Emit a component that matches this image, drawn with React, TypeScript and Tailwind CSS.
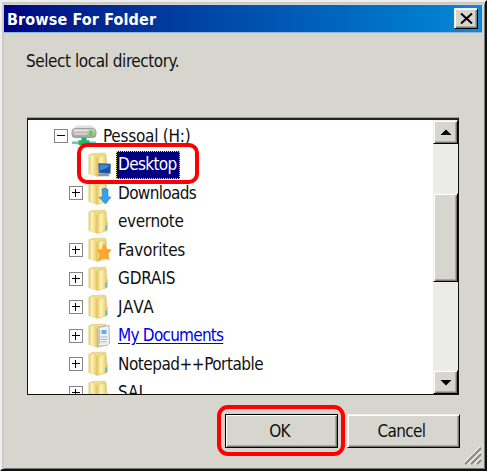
import React from "react";

type IconKind = "plain" | "desktop" | "download" | "star" | "docs";

function FolderIcon({ kind }: { kind: IconKind }) {
  return (
    <svg width="24" height="26" viewBox="0 0 24 26" className="block shrink-0">
      <defs>
        <linearGradient id="back" x1="0" x2="1">
          <stop offset="0" stopColor="#ecd989" />
          <stop offset="1" stopColor="#eedd93" />
        </linearGradient>
        <linearGradient id="front" x1="0" x2="1">
          <stop offset="0" stopColor="#e8cb68" />
          <stop offset="0.35" stopColor="#fff3b8" />
          <stop offset="1" stopColor="#e3c55c" />
        </linearGradient>
      </defs>
      <path d="M.8 3 L4 1.5 L17 1 L18 2 L18.5 21.5 L9 24 L.8 21.5Z" fill="url(#back)" stroke="#e0ca7c" strokeWidth=".6" />
      <path d="M1 4 L5 3 Q9 3.5 9.3 7 L9.3 24.5 L1.2 21.8Z" fill="url(#front)" />
      <path d="M9.3 7 Q9.3 5 12 4.3 L16.5 3.2 Q18 3.2 18 5 L18.3 12 L19.5 13.5 L19.3 21.5 L9.3 24.5Z" fill="url(#front)" stroke="#dabd5c" strokeWidth=".5" />
      {kind === "plain" && <path d="M17.2 16.5h1.8v4.5l-1.8 .6Z" fill="#5cc1c7" />}
      {kind === "desktop" && (
        <g>
          <path d="M10.5 11.5 L22.5 12 L22.2 21.5 L11 21Z" fill="#1c509f" stroke="#607c9f" strokeWidth=".8" />
          <path d="M11.5 12.6 L21.5 13.2 L19 16 L11.7 18.5Z" fill="#3b89df" />
          <path d="M9 21.7 L20 21.7 L22 24.2 L11 24.2Z" fill="#8b98a2" />
        </g>
      )}
      {kind === "download" && (
        <path d="M14 9 Q17 7.5 20 9.5 L20 17 L23 17 L17.5 24 L11 17.3 L14.4 17Z" fill="#38a0ec" stroke="#2380c9" strokeWidth=".6" />
      )}
      {kind === "star" && (
        <path d="M16 6.5 L18.2 12 L23 12.8 L20 17 L21 22.5 L16.2 21 L10.5 23.5 L12 18 L9.5 13 L14 12.5Z" fill="#ffa62d" stroke="#f09a30" strokeWidth=".6" />
      )}
      {kind === "docs" && (
        <g>
          <path d="M10 4.5 L21 2.5 L21.5 20 L19 22.5 L10 23Z" fill="#eef3f7" stroke="#9ba6ae" strokeWidth=".8" />
          <path d="M13.5 7h5v4h-5z" fill="#65aee8" />
          <path d="M12.5 14h7M12.5 16.5h7M12.5 19h6M11.3 6v15" stroke="#a4afb6" strokeWidth=".9" />
        </g>
      )}
    </svg>
  );
}

function DriveIcon() {
  return (
    <svg width="26" height="24" viewBox="0 0 26 24" className="block shrink-0">
      <defs>
        <linearGradient id="drive" x1="0" x2="0" y1="0" y2="1">
          <stop offset="0" stopColor="#d6d6d6" />
          <stop offset="1" stopColor="#a0a0a0" />
        </linearGradient>
      </defs>
      <path d="M3 4 Q4 1.5 7 1.5H20Q22.5 1.5 23.5 4L25 8.5H1Z" fill="#dedede" />
      <rect x="1" y="4.5" width="24" height="9" rx="3" fill="url(#drive)" stroke="#909090" strokeWidth=".8" />
      <path d="M3 6.5h14M3 10h13" stroke="#ebebeb" strokeWidth="1" />
      <rect x="18.5" y="6.5" width="3" height="5" fill="#46dc29" />
      <path d="M10.5 13.8h5v3h-5z" fill="#20a762" />
      <path d="M1 17.5h24v2.6H1z" fill="#6fc5b1" />
      <path d="M7.5 16.2h11v5h-11z" fill="#22b66a" />
    </svg>
  );
}

function Expander({ open = false }: { open?: boolean }) {
  return (
    <svg width="14" height="14" viewBox="0 0 14 14" shapeRendering="crispEdges" className="block shrink-0">
      <rect x=".5" y=".5" width="13" height="13" fill="#fff" stroke="#858585" />
      <path d="M3 6h8v1H3z" fill="#000" />
      {!open && <path d="M6 3h1v8H6z" fill="#000" />}
    </svg>
  );
}

const rows: { name: string; kind: IconKind; expand: boolean; text: string }[] = [
  { name: "Desktop", kind: "desktop", expand: false, text: "tracking-[-0.65px]" },
  { name: "Downloads", kind: "download", expand: true, text: "tracking-[-0.65px]" },
  { name: "evernote", kind: "plain", expand: false, text: "tracking-[-0.35px]" },
  { name: "Favorites", kind: "star", expand: true, text: "tracking-[-0.2px]" },
  { name: "GDRAIS", kind: "plain", expand: true, text: "tracking-[-0.15px]" },
  { name: "JAVA", kind: "plain", expand: true, text: "tracking-[0.8px]" },
  { name: "My Documents", kind: "docs", expand: true, text: "tracking-[-0.75px] text-[#0000f0] underline underline-offset-2" },
  { name: "Notepad++Portable", kind: "plain", expand: true, text: "tracking-[-0.5px]" },
  { name: "SAJ", kind: "plain", expand: true, text: "" },
];

const raised =
  "border border-t-[#eeeeec] border-l-[#eeeeec] border-r-black border-b-black shadow-[inset_1px_1px_0_#ffffff,inset_-1px_-1px_0_#777773,inset_-2px_-2px_0_#a9a9a4] bg-[#d6d6ce]";

function ScrollButton({ down = false }: { down?: boolean }) {
  return (
    <div className={`flex h-6 w-full shrink-0 items-center justify-center ${raised}`}>
      <svg width="12" height="7" viewBox="0 0 12 7">
        <path d={down ? "M0.5 1h11L6 6.5Z" : "M0.5 6h11L6 .5Z"} fill="#000" />
      </svg>
    </div>
  );
}

export default function App() {
  return (
    <div className="flex h-[471px] w-[487px] flex-col overflow-hidden border-t-2 border-r-2 border-b-2 border-l-2 border-t-[#eeeeee] border-r-[#111] border-b-[#111] border-l-[#eeeeee] bg-[#d6d6ce] pt-[3px] text-[17px] leading-none text-[#111] shadow-[inset_2px_2px_0_#cacaca,inset_-1px_-1px_0_#777] [font-family:'DejaVu_Sans_Condensed','DejaVu_Sans',sans-serif]">
      <header className="mr-[3px] ml-[2px] flex h-7 shrink-0 items-center justify-between border-b border-b-[#91b6d7] bg-linear-to-r from-[#000080] to-[#108ad8] pr-1 pl-[3px]">
        <h1 className="pt-[2px] text-[16px] font-bold tracking-[0.13px] whitespace-nowrap text-white">Browse For Folder</h1>
        <button className={`flex h-[21px] w-6 items-center justify-center ${raised}`}>
          <svg width="13" height="11" viewBox="0 0 13 11">
            <path d="M1 .5 12 10.5M12 .5 1 10.5" stroke="#000" strokeWidth="2" />
          </svg>
        </button>
      </header>
      <p className="mt-5 ml-6 h-[65px] shrink-0 text-[17px] tracking-[-0.44px] whitespace-nowrap">Select local directory.</p>
      <main className="relative ml-[25px] flex h-[277px] w-[432px] shrink-0 border border-t-2 border-[#111] border-t-[#222] bg-white shadow-[0_-1px_0_#a0a09a]">
        <div className="h-full flex-1 overflow-hidden pt-[2px]">
          <div className="flex h-[28.5px] items-center pl-[26px]">
            <Expander open />
            <div className="ml-[3px]"><DriveIcon /></div>
            <span className="ml-[6px] tracking-[-0.25px] whitespace-nowrap">Pessoal (H:)</span>
          </div>
          {rows.map((r) => (
            <div key={r.name} className="flex h-[28.5px] items-center pl-[41px]">
              <div className="w-[14px]">{r.expand && <Expander />}</div>
              <div className="ml-[5px]"><FolderIcon kind={r.kind} /></div>
              {r.name === "Desktop" ? (
                <span className={`ml-[4px] flex h-7 w-[64px] items-center border border-dotted border-[#e4e45b] bg-[#000080] pl-px text-white ${r.text}`}>{r.name}</span>
              ) : (
                <span className={`ml-[6px] whitespace-nowrap ${r.text}`}>{r.name}</span>
              )}
            </div>
          ))}
        </div>
        <div className="flex w-[25px] flex-col bg-[repeating-conic-gradient(#e3e4df_0_25%,#f3f3f0_0_50%)] bg-size-[2px_2px]">
          <ScrollButton />
          <div className="h-[49px] shrink-0" />
          <div className={`h-[89px] shrink-0 ${raised}`} />
          <div className="flex-1" />
          <ScrollButton down />
        </div>
        <div className="absolute top-[23px] left-[49px] h-[41px] w-[122px] rounded-[10px] border-4 border-[#ff0000]" />
      </main>
      <footer className="flex flex-1 items-start gap-[9px] pt-[19px] pl-[223px]">
        <div className="relative">
          <button className={`flex h-[34px] w-[113px] items-center justify-center pr-1 tracking-[-0.8px] outline-1 -outline-offset-1 outline-black ${raised}`}>OK</button>
          <div className="absolute -top-[9px] -left-2 h-[51px] w-32 rounded-[11px] border-4 border-[#ff0000]" />
        </div>
        <button className={`flex h-[34px] w-[113px] items-center justify-center pr-1 tracking-[-0.65px] ${raised}`}>Cancel</button>
        <svg width="19" height="19" viewBox="0 0 19 19" className="-ml-[5px] mt-[33px] shrink-0">
          <path d="M1 17 17 1M7 17 17 7M13 17 17 13" stroke="#888883" strokeWidth="2" />
          <path d="M0 16 16 0M5 17 17 5M11 17 17 11" stroke="#f8f8f5" strokeWidth="1" />
        </svg>
      </footer>
    </div>
  );
}
